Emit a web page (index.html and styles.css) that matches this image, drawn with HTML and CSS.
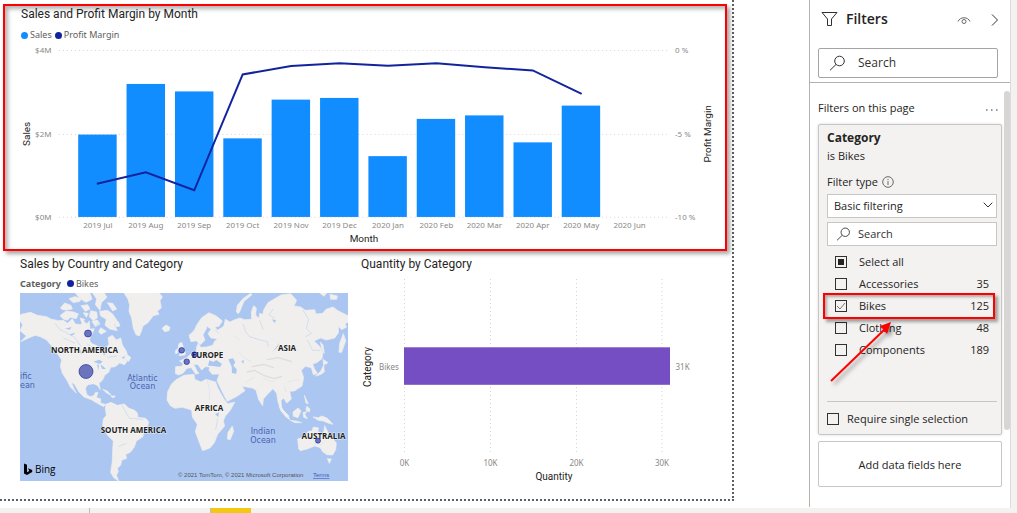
FILE: index.html
```html
<!DOCTYPE html>
<html lang="en">
<head>
<meta charset="utf-8">
<title>Sales report</title>
<link rel="stylesheet" href="styles.css">
</head>
<body>
<div class="workspace">
  <main class="report">
    <section class="visual visual-sales">
      <h2 class="visual-title">Sales and Profit Margin by Month</h2>
      <div class="legend"><i class="dot dot-sales"></i><span>Sales</span><i class="dot dot-margin"></i><span>Profit Margin</span></div>
      <svg class="chart" viewBox="5 42 721 206" role="img" aria-label="Sales and profit margin by month">
        <g class="grid">
          <line x1="59" y1="50.5" x2="669" y2="50.5"/>
          <line x1="59" y1="134.5" x2="669" y2="134.5"/>
          <line x1="59" y1="217.5" x2="669" y2="217.5"/>
        </g>
        <g class="bars">
          <rect x="78.3" y="134.7" width="38.5" height="82.5"/>
          <rect x="126.7" y="84" width="38.5" height="133.2"/>
          <rect x="175.2" y="91.5" width="38.5" height="125.7"/>
          <rect x="223.6" y="138.5" width="38.5" height="78.7"/>
          <rect x="272" y="99.7" width="38.5" height="117.5"/>
          <rect x="320.5" y="98" width="38.5" height="119.2"/>
          <rect x="368.9" y="156.3" width="38.5" height="60.9"/>
          <rect x="417.3" y="119" width="38.5" height="98.2"/>
          <rect x="465.7" y="115.5" width="38.5" height="101.7"/>
          <rect x="514.2" y="142.5" width="38.5" height="74.7"/>
          <rect x="562.5" y="105.7" width="38.5" height="111.5"/>
        </g>
        <polyline class="margin-line" points="97,184 146,172.5 194.5,190.5 243,74.5 291.5,66 340,63.3 388.5,65.7 437,63.3 485.5,67.3 533.5,70.5 582.5,94"/>
        <g class="tick end">
          <text x="51.5" y="53">$4M</text><text x="51.5" y="137">$2M</text><text x="51.5" y="220">$0M</text>
        </g>
        <g class="tick">
          <text x="676" y="53">0 %</text><text x="676" y="137">-5 %</text><text x="676" y="220">-10 %</text>
        </g>
        <g class="tick mid">
          <text x="98" y="228">2019 Jul</text><text x="146" y="228">2019 Aug</text><text x="194.5" y="228">2019 Sep</text><text x="243" y="228">2019 Oct</text><text x="291.5" y="228">2019 Nov</text><text x="340" y="228">2019 Dec</text><text x="388.5" y="228">2020 Jan</text><text x="437" y="228">2020 Feb</text><text x="485" y="228">2020 Mar</text><text x="533.5" y="228">2020 Apr</text><text x="582" y="228">2020 May</text><text x="630.5" y="228">2020 Jun</text>
        </g>
        <g class="axis">
          <text x="364.5" y="242">Month</text>
          <text transform="translate(30.5 134) rotate(-90)">Sales</text>
          <text transform="translate(711.5 134) rotate(-90)">Profit Margin</text>
        </g>
      </svg>
    </section>
    <div class="lower">
      <section class="visual visual-map">
        <h2 class="visual-title">Sales by Country and Category</h2>
        <div class="legend"><b>Category</b><i class="dot dot-margin"></i><span>Bikes</span></div>
        <div class="map">
          <svg class="chart" viewBox="20 293 328 188" role="img" aria-label="World map of bike sales">
            <rect class="sea" x="20" y="293" width="328" height="188"/>
            <g transform="translate(0 250) scale(.33333)">
              <g class="land">
                <path d="M60 194L78 190 92 187 112 196 140 200 152 207 175 212 190 211 203 220 217 206 226 222 243 224 250 212 260 222 268 213 270 237 283 236 274 257 268 268 273 279 290 285 304 300 312 318 318 311 321 292 327 282 324 263 337 256 349 270 362 264 367 285 378 302 382 313 363 323 382 333 374 344 359 339 346 350 332 352 326 367 314 376 308 390 297 400 301 419 293 407 281 401 264 404 256 414 260 433 270 440 281 437 286 428 294 427 289 443 302 446 302 460 317 463 311 470 292 460 274 449 252 441 237 426 223 402 214 397 222 417 229 429 211 411 201 391 187 370 181 348 185 330 175 315 155 288 140 270 121 260 105 256 88 263 62 275 79 258 60 242 68 225 60 212Z"/>
                <path d="M372 129L384 148 389 166 387 184 395 205 400 235 408 254 418 258 423 247 429 228 444 218 460 197 477 193 472 184 484 173 480 152 487 141 478 129ZM486 235L498 225 510 232 507 242 494 245Z"/>
                <path d="M181 174L194 159 213 166 217 177 201 180 188 179ZM180 197L198 183 221 186 235 192 229 206 211 202 202 211 190 207ZM207 146L225 140 243 145 240 154 220 158ZM226 129L270 129 276 148 258 157 240 146ZM243 167L263 164 270 177 256 184ZM250 188L265 190 259 202ZM278 129L313 129 321 142 304 158 300 181 286 164 290 147ZM299 184L322 181 338 192 350 210 342 222 352 242 329 237 315 226 319 208 302 198ZM322 158L338 160 350 177 338 183ZM340 206L355 215 360 228 348 230ZM272 182L290 186 292 203 280 212 268 200ZM276 214L292 210 300 222 286 230ZM240 204L254 208 246 220ZM302 233L319 244 303 253 296 245ZM378 312L392 322 387 334 373 327ZM308 418L322 423 334 436 320 429ZM332 438L346 438 340 444Z"/>
                <path d="M318 463L333 457 352 466 373 462 387 475 402 480 412 488 414 502 437 505 446 515 443 528 431 540 429 560 409 573 403 591 391 607 377 613 380 625 365 631 362 646 352 655 355 665 349 675 356 693 341 683 332 667 337 633 338 598 340 573 321 554 308 525 310 507 319 496 316 476Z"/>
              </g>
              <g class="lakes">
                <path d="M274 254L285 264 307 268 321 269 317 287 311 306 302 302 294 287 276 279ZM280 335L298 329 308 335 299 342ZM291 343L297 345 295 362ZM301 343L311 350 318 357 306 357ZM195 236L215 231 209 239ZM208 253L227 248 215 258ZM240 295L247 315 241 308Z"/>
                <path class="river" d="M165 220L181 240 198 247 225 263 243 289M275 238L301 215M260 281L280 294M323 322L351 318M190 264L225 280M366 467L388 505 430 508M354 590L379 580"/>
              </g>
              <g transform="translate(525 0)">
                <g class="land">
                  <path d="M2 350L20 349 25 341 14 333 37 322 53 306 64 302 65 291 69 281 78 292 95 291 113 286 119 273 128 267 108 264 99 251 108 238 97 229 91 242 84 254 90 271 75 285 64 272 48 275 42 256 57 242 67 222 80 203 102 188 124 198 142 213 132 229 120 231 127 241 146 229 151 208 165 216 179 209 195 204 208 209 230 208 229 185 236 167 244 174 242 196 252 205 254 190 263 193 267 178 279 158 301 145 318 135 347 131 365 151 357 168 377 171 391 181 419 179 423 192 443 190 453 178 474 171 487 181 519 197 519 216 510 222 515 231 500 239 491 229 490 249 479 264 454 270 437 264 417 273 433 288 444 307 441 326 425 338 413 342 419 358 427 370 415 374 409 353 391 349 379 361 386 383 381 408 358 423 344 424 349 447 335 459 326 444 318 452 320 472 332 495 319 484 309 456 305 430 294 416 279 431 265 447 263 467 251 449 243 420 232 414 202 409 197 403 210 422 186 439 157 454 148 438 135 411 126 392 133 372 112 373 102 361 104 351 91 350 80 360 69 344 56 342 66 363 72 370 62 373 49 353 36 355 24 370 10 375 1 370Z"/>
                  <path d="M-24 450L-22 425 -11 403 3 389 27 376 57 373 59 388 78 396 93 388 122 396 128 413 147 447 158 461 179 457 166 481 151 498 145 513 149 528 128 553 118 578 105 594 83 602 75 583 61 545 67 523 52 501 50 480 22 472 0 475 -14 467ZM172 528L176 544 165 570 157 567 159 547Z"/>
                  <path d="M12 281L20 277 31 308 30 315 12 317 18 307 9 296ZM2 300L9 298 8 309 1 311ZM184 186L187 166 204 146 227 130 231 134 207 154 194 185 190 191ZM434 129L455 129 447 139ZM465 133L487 138 485 148 467 148ZM436 276L444 285 448 310 440 296ZM494 280L505 251 512 272 500 307 492 307ZM444 328L459 338 446 345ZM446 345L448 366 436 374 421 378 437 364ZM388 436L393 447 400 461 393 459ZM395 469L405 477 403 486 393 480ZM312 469L324 480 340 496 344 509 331 499 319 483ZM346 511L367 514 380 518 360 518ZM354 486L369 474 378 482 369 503 355 499ZM384 488L397 484 389 492 397 506 386 502ZM414 501L430 503 441 498 457 505 474 523 459 519 445 513 430 511ZM457 626L469 627 463 640Z"/>
                  <path d="M368 567L387 560 400 544 411 543 415 531 431 534 428 544 445 554 449 527 459 547 469 561 484 579 482 599 473 615 456 614 443 605 436 593 419 588 399 596 376 602 371 596Z"/>
                </g>
                <g class="lakes">
                  <path d="M99 347L103 331 115 336 124 330 141 342 135 351 112 348ZM160 328L174 325 181 337 175 347 185 357 184 371 171 369 170 350ZM199 334L207 330 205 341ZM292 306L314 278 307 292ZM120 493L132 487 130 501ZM290 208L303 211 299 219Z"/>
                  <path class="river" d="M204 222L213 247 224 260 252 269 277 275 279 290M254 211L265 239M295 176L282 195 301 206M383 179L401 208 394 236 410 250 391 260M397 270L413 301 436 301M128 505L122 540M120 239L132 251"/>
                  <path class="river faint" d="M190 304L206 323 229 334M238 381L212 397M264 384L287 394 302 393M338 395L373 389M328 406L333 427M96 390L104 421 102 449M176 256L194 270M128 301L146 310M418 550L421 585M449 574L435 587"/>
                  <path class="ridge" d="M216 366L239 361 270 378 297 386 321 379M230 350L267 343 297 354M275 329L310 323 350 335"/>
                </g>
              </g>
            </g>
            <g class="continent">
              <text x="84.5" y="353">NORTH AMERICA</text><text x="133.5" y="433">SOUTH AMERICA</text><text x="207.5" y="357.5">EUROPE</text><text x="209" y="410.5">AFRICA</text><text x="287" y="350.5">ASIA</text><text x="323.5" y="438.5">AUSTRALIA</text>
            </g>
            <g class="sales-bubbles">
              <circle cx="88" cy="333.5" r="3.5"/><circle cx="86" cy="371.5" r="7"/><circle cx="181.7" cy="350.3" r="2.8"/><circle cx="194.5" cy="354.5" r="2.8"/><circle cx="186.7" cy="361.7" r="2.8"/><circle cx="318" cy="440.7" r="2.5"/>
            </g>
            <g class="ocean">
              <text x="20" y="379" text-anchor="start">ific</text><text x="20" y="388" text-anchor="start">ean</text>
              <text x="142.5" y="380.5">Atlantic</text><text x="142.5" y="389">Ocean</text><text x="263" y="434">Indian</text><text x="263" y="442.5">Ocean</text>
            </g>
            <path class="bing-mark" d="M24 463.5L27 464.8V472.2L29.2 470.9 28 468.3 32.2 470V472L27 475 24 473.4Z"/>
            <text class="bing" x="35" y="473">Bing</text>
            <text class="credit" x="178" y="477">© 2021 TomTom, © 2021 Microsoft Corporation</text>
            <a href="#terms"><text class="credit terms" x="313" y="477">Terms</text></a>
          </svg>
        </div>
      </section>
      <section class="visual visual-quantity">
        <h2 class="visual-title">Quantity by Category</h2>
        <svg class="chart" viewBox="361 272 366 218" role="img" aria-label="Quantity by category">
          <g class="grid">
            <line x1="404.5" y1="279" x2="404.5" y2="455"/><line x1="490.5" y1="279" x2="490.5" y2="455"/><line x1="576.5" y1="279" x2="576.5" y2="455"/><line x1="662" y1="279" x2="662" y2="455"/>
          </g>
          <rect class="quantity-bar" x="404" y="347.3" width="266" height="37.5"/>
          <g class="tick mid"><text x="404.5" y="466">0K</text><text x="490.5" y="466">10K</text><text x="576.5" y="466">20K</text><text x="662" y="466">30K</text></g>
          <g class="tick"><text x="379" y="370">Bikes</text><text x="675.5" y="370">31K</text></g>
          <g class="axis"><text x="554" y="480">Quantity</text><text transform="translate(371 367) rotate(-90)">Category</text></g>
        </svg>
      </section>
    </div>
  </main>

  <aside class="filters">
    <header class="filters-head">
      <svg width="18" height="16" viewBox="0 0 18 16"><path d="M1 1.5H16L10.5 8V14.5H6.5V8Z"/></svg>
      <h1>Filters</h1>
      <button class="icon-btn" aria-label="Show filter pane"><svg class="i-eye" width="14" height="9" viewBox="0 0 14 9"><path d="M1 5.5C3 .5 11 .5 13 5.5"/><circle cx="7" cy="5.5" r="2"/></svg></button>
      <button class="icon-btn" aria-label="Collapse"><svg width="8" height="12" viewBox="0 0 8 12"><path d="M1 .5L6.5 6 1 11.5"/></svg></button>
    </header>
    <label class="search search-main"><svg width="17" height="16" viewBox="0 0 17 16"><circle cx="10.5" cy="6" r="4.8"/><path d="M7 9.5L1 15.3"/></svg><input type="text" aria-label="Search filters" placeholder="Search"></label>
    <div class="filters-body">
      <div class="filters-list">
        <div class="group-head"><span>Filters on this page</span><button class="more" aria-label="More options"><svg width="12" height="2" viewBox="0 0 12 2"><path d="M0 1H1.5M5 1H6.5M10 1H11.5"/></svg></button></div>
        <section class="card">
          <h3>Category</h3>
          <p>is Bikes</p>
          <div class="type-row"><label for="type">Filter type</label><svg class="i-info" width="12" height="12" viewBox="0 0 12 12"><circle cx="6" cy="6" r="5.3"/><path d="M6 5.2V9M6 3V4.2"/></svg></div>
          <div class="select"><select id="type"><option>Basic filtering</option></select><svg width="10" height="6" viewBox="0 0 10 6"><path d="M.7.7L5 5 9.3.7"/></svg></div>
          <label class="search"><svg width="15" height="14" viewBox="0 0 17 16"><circle cx="10.5" cy="6" r="4.8"/><path d="M7 9.5L1 15.3"/></svg><input type="text" aria-label="Search values" placeholder="Search"></label>
          <ul class="values">
            <li><label><input type="checkbox" class="partial">Select all</label></li>
            <li><label><input type="checkbox">Accessories</label><span>35</span></li>
            <li class="marked"><label><input type="checkbox" checked>Bikes</label><span>125</span>
              <svg class="arrow" width="68" height="66" viewBox="0 0 68 66"><path class="shaft" d="M4 60L57 9"/><path class="head" d="M64 1L60 13 53 5Z"/></svg>
            </li>
            <li><label><input type="checkbox">Clothing</label><span>48</span></li>
            <li><label><input type="checkbox">Components</label><span>189</span></li>
          </ul>
          <label class="single"><input type="checkbox">Require single selection</label>
        </section>
        <button class="drop">Add data fields here</button>
      </div>
      <div class="scroll"></div>
    </div>
  </aside>
  <div class="edge"></div>
</div>
<footer class="tabs"><i class="tab"></i><i class="tab"></i><i class="tab active"></i></footer>
</body>
</html>
```
FILE: styles.css
```css
* { box-sizing: border-box; }
body {
  margin: 0;
  min-height: 100vh;
  display: flex;
  flex-direction: column;
  background: #fff;
  color: #252423;
  font-family: "Open Sans", "Noto Sans", sans-serif;
  font-size: 11px;
  line-height: 16px;
}
h1, h2, h3, p, ul { margin: 0; padding: 0; }
button, input, select { font: inherit; color: inherit; }
.workspace {
  flex: 1;
  display: grid;
  grid-template-columns: minmax(0, 1fr) 201px 7px;
}

/* Report canvas */
.report {
  margin: 0 75px 7px 0;
  padding: 4px 7px 2px 3px;
  background:
    repeating-linear-gradient(to bottom, #5f5f5f 0 2px, transparent 2px 4px) right top / 2px 100% no-repeat,
    repeating-linear-gradient(to right, #5f5f5f 0 2px, transparent 2px 4px) left bottom / 100% 2px no-repeat;
}
.visual-title { font: 400 12px/14px Roboto, sans-serif; }
.chart { display: block; width: 100%; height: auto; }
.visual-sales {
  padding-bottom: 1px;
  border: 2px solid #f00;
  box-shadow: 3px 3px 4px rgba(0, 0, 0, .35), inset 3px 3px 4px rgba(0, 0, 0, .3);
}
.visual-sales .visual-title { padding: 1px 0 0 16px; }
.legend {
  display: flex;
  align-items: center;
  gap: 2px;
  height: 12px;
  font: 400 9px/12px "Noto Sans", sans-serif;
  color: #605e5c;
}
.visual-sales .legend { margin: 8px 0 1px 16px; }
.dot { width: 7px; height: 7px; border-radius: 50%; }
.dot-sales { background: #118dff; }
.dot-margin { background: #12239e; }
.legend span + .dot { margin-left: 1px; }
.legend b { margin-right: 4px; }
.lower {
  display: grid;
  grid-template-columns: 328fr 366fr;
  gap: 13px;
  padding: 6px 0 0 17px;
}
.visual-map .legend { margin: 7px 0 3px; }
.visual-quantity .chart { margin-top: 1px; }

.grid line { stroke: #d5d5d5; stroke-dasharray: 1 3; }
.bars rect { fill: #118dff; }
.margin-line { fill: none; stroke: #12239e; stroke-width: 2; }
.quantity-bar { fill: #744ec2; }
.tick { font: 8px "Noto Sans", sans-serif; fill: #8a8886; }
.mid { text-anchor: middle; }
.end { text-anchor: end; }
.axis { font: 10px Roboto, sans-serif; fill: #252423; text-anchor: middle; }

.sea { fill: #abc7f1; }
.land { fill: #f0efed; stroke: #f0efed; stroke-width: 2; stroke-linejoin: round; }
.lakes { fill: #abc7f1; }
.river { fill: none; stroke: #c3d5f0; stroke-width: 2; }
.faint { stroke: #dbe2ec; }
.ridge { fill: none; stroke: #dedddb; stroke-width: 4; }
.sales-bubbles { fill: #12239e; fill-opacity: .6; stroke: #12239e; stroke-opacity: .6; }
.continent {
  font: 700 8px "Open Sans", sans-serif;
  fill: #222;
  stroke: #fff;
  stroke-width: 1;
  stroke-opacity: .7;
  paint-order: stroke;
  text-anchor: middle;
}
.ocean { font: 8px "DejaVu Sans", sans-serif; fill: #4a62b0; text-anchor: middle; }
.bing { font: 10px "Open Sans", sans-serif; }
.credit { font: 6px "Liberation Sans", sans-serif; fill: #555; }
.terms { fill: #3b5bb5; text-decoration: underline; }

/* Filter pane */
.filters {
  min-width: 0;
  margin-bottom: 1px;
  border-left: 1px solid #b3b0ad;
}
.filters svg { fill: none; stroke: #323130; flex: none; }
.filters-head {
  display: flex;
  align-items: center;
  height: 40px;
  padding: 0 11px 2px 11px;
}
.filters-head h1 { flex: 1; margin-left: 7px; font-size: 14px; line-height: 20px; font-weight: 600; }
.icon-btn { display: flex; padding: 2px 0 0; margin-left: 20px; border: 0; background: none; }
.filters .i-eye, .filters .i-info { stroke: #6a6866; }
.search {
  display: flex;
  align-items: center;
  border: 1px solid #c8c6c4;
  background: #fff;
}
.search input { flex: 1; min-width: 0; padding: 0; border: 0; background: none; }
.search input::placeholder { color: #323130; opacity: 1; }
.search-main {
  height: 30px;
  margin: 8px 12px 4px 8px;
  padding-left: 10px;
  gap: 12px;
  font-size: 12px;
  border-color: #a6a4a2;
  border-radius: 2px;
}
.filters-body { display: flex; border-top: 1px solid #b3b0ad; }
.filters-list { flex: 1; min-width: 0; padding-left: 8px; }
.scroll { flex: none; width: 6px; height: 339px; margin: 8px 0 0 2px; border-radius: 3px; background: #d8d6d4; }
.group-head { display: flex; justify-content: space-between; align-items: center; height: 41px; padding: 8px 4px 0 0; }
.more { display: flex; padding: 4px 0 0; border: 0; background: none; }
.card {
  padding: 4px 4px 7px 8px;
  border: 1px solid #c8c6c4;
  border-radius: 2px;
  background: #f3f2f1;
  box-shadow: 0 0 3px rgba(0, 0, 0, .15);
}
.card h3 { font-size: 12px; line-height: 18px; font-weight: 700; }
.card p { line-height: 18px; }
.type-row { display: flex; align-items: center; gap: 4px; height: 18px; margin-top: 8px; }
.select { position: relative; margin: 3px 0 4px; }
.select select {
  display: block;
  width: 100%;
  height: 24px;
  padding: 0 6px;
  appearance: none;
  border: 1px solid #c8c6c4;
  border-radius: 0;
  background: #fff;
}
.select svg { position: absolute; right: 4px; top: 8px; pointer-events: none; }
.card .search { height: 24px; padding-left: 8px; gap: 7px; }
.values { list-style: none; margin-top: 5px; }
.values li { position: relative; display: flex; justify-content: space-between; height: 22px; padding: 0 8px; align-items: center; }
.values label { display: flex; align-items: center; gap: 12px; }
input[type="checkbox"] {
  appearance: none;
  flex: none;
  width: 12px;
  height: 12px;
  margin: 0;
  border: 1px solid #323130;
  background: transparent center / 100% no-repeat;
}
input.partial { box-shadow: inset 0 0 0 2px #f3f2f1; background-color: #252423; }
input[type="checkbox"]:checked { background-image: url("data:image/svg+xml,%3Csvg xmlns='http://www.w3.org/2000/svg' viewBox='0 0 10 10'%3E%3Cpath d='M1 5l3 3 5-6' fill='none' stroke='%23777'/%3E%3C/svg%3E"); }
.values .marked { z-index: 1; }
.marked::after {
  content: "";
  position: absolute;
  inset: -2px 2px -2px -4px;
  border: 2px solid #f00;
  box-shadow: 3px 3px 3px rgba(0, 0, 0, .35), inset 2px 2px 3px rgba(0, 0, 0, .3);
}
.filters .arrow { position: absolute; left: 0; top: 26px; filter: drop-shadow(3px 3px 2px rgba(0, 0, 0, .4)); }
.arrow .shaft { stroke: #f00; stroke-width: 2; }
.arrow .head { fill: #f00; stroke: none; }
.single {
  display: flex;
  align-items: center;
  gap: 8px;
  margin-top: 40px;
  padding-top: 9px;
  border-top: 1px solid #c8c6c4;
}
.drop {
  width: 100%;
  height: 46px;
  margin-top: 6px;
  padding-top: 2px;
  border: 1px solid #c8c6c4;
  border-radius: 2px;
  background: #fff;
}
.edge { border-left: 1px solid #dddbd9; background: #f3f2f1; }
.tabs { display: flex; height: 5px; background: #f3f2f1; }
.tab { width: 90px; border-right: 1px solid #bebbb8; }
.tab + .tab { width: 121px; }
.tab + .tab.active { width: 40px; border: 0; background: #f2c811; }
```
